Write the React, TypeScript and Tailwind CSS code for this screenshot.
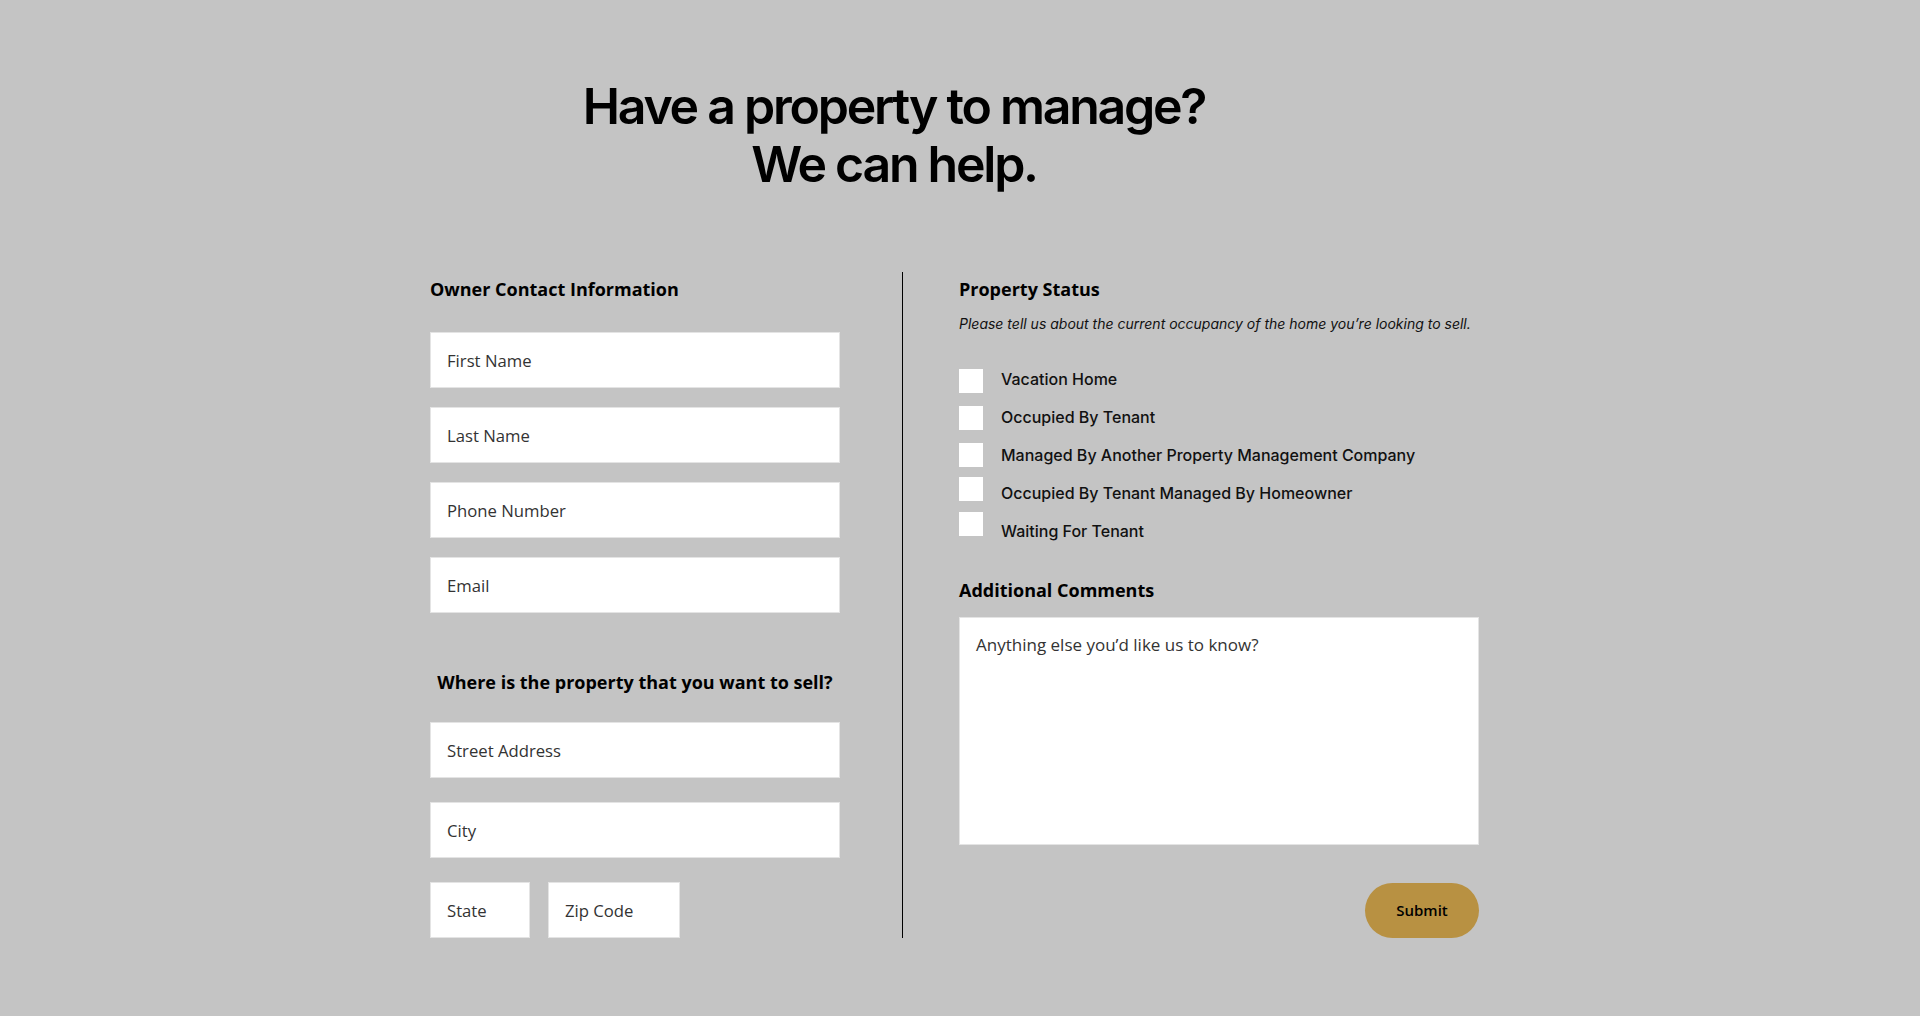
const poppinsLike = { fontFamily: '"Open Sans", "Liberation Sans", sans-serif' }

const statuses = [
  { label: 'Vacation Home', nudge: 'translate-y-[2px]' },
  { label: 'Occupied By Tenant', nudge: 'translate-y-[1px]' },
  { label: 'Managed By Another Property Management Company', nudge: 'translate-y-[0px]' },
  { label: 'Occupied By Tenant Managed By Homeowner', nudge: '-translate-y-[4px]' },
  { label: 'Waiting For Tenant', nudge: '-translate-y-[7px]' },
]

function Field({ placeholder, className = '' }: { placeholder: string; className?: string }) {
  return (
    <input
      type="text"
      placeholder={placeholder}
      className={`h-[56px] bg-white border border-[#e4e4e4] px-4 text-[16.7px] text-[#222] placeholder:text-[#333] outline-none ${className}`}
      style={poppinsLike}
    />
  )
}

export default function App() {
  return (
    <div className="min-h-screen bg-[#c4c4c4] text-black font-['Inter',sans-serif]">
      <h1 className="pt-[77px] pr-[132px] text-center text-[50px] leading-[58px] font-semibold tracking-[-0.045em] text-black">
        Have a property to manage?
        <br />
        We can help.
      </h1>

      <form className="mt-[79px] ml-[430px] flex pb-[78px]">
        {/* left: owner + address */}
        <div className="w-[410px] flex flex-col">
          <h2 className="mt-[4px] text-[18px] leading-[27px] font-bold" style={poppinsLike}>
            Owner Contact Information
          </h2>
          <div className="mt-[29px] flex flex-col gap-[19px]">
            <Field placeholder="First Name" />
            <Field placeholder="Last Name" />
            <Field placeholder="Phone Number" />
            <Field placeholder="Email" />
          </div>

          <h2 className="mt-[56px] text-center text-[18px] leading-[27px] font-bold" style={poppinsLike}>
            Where is the property that you want to sell?
          </h2>
          <div className="mt-[26px] flex flex-col gap-[24px]">
            <Field placeholder="Street Address" className="h-[55px]" />
            <Field placeholder="City" className="h-[55px]" />
            <div className="flex gap-[18px]">
              <Field placeholder="State" className="h-[55px] w-[100px]" />
              <Field placeholder="Zip Code" className="h-[55px] w-[132px]" />
            </div>
          </div>
        </div>

        <div className="ml-[62px] w-px bg-black" />

        {/* right: status + comments */}
        <div className="ml-[56px] w-[520px] flex flex-col">
          <h2 className="mt-[4px] text-[18px] leading-[27px] font-bold" style={poppinsLike}>
            Property Status
          </h2>
          <p className="mt-[11px] text-[14px] leading-[20px] italic text-[#111]">
            Please tell us about the current occupancy of the home you’re looking to sell.
          </p>
          <div className="mt-[26px] flex flex-col">
            {statuses.map((s) => (
              <label key={s.label} className="h-[38px] flex items-center gap-[18px]">
                <span className={`w-[24px] h-[24px] bg-white ${s.nudge}`} />
                <span className="text-[16px] font-medium text-[#111]">{s.label}</span>
              </label>
            ))}
          </div>

          <h2 className="mt-[27px] text-[18px] leading-[27px] font-bold" style={poppinsLike}>
            Additional Comments
          </h2>
          <textarea
            placeholder="Anything else you’d like us to know?"
            className="mt-[13px] h-[228px] resize-none bg-white border border-[#e4e4e4] px-4 pt-[16px] text-[17px] leading-[22px] placeholder:text-[#333] outline-none"
            style={poppinsLike}
          />
          <button
            type="button"
            className="mt-[38px] self-end w-[114px] h-[55px] rounded-full bg-[#b89142] text-[15px] font-semibold text-black"
            style={poppinsLike}
          >
            Submit
          </button>
        </div>
      </form>
    </div>
  )
}
